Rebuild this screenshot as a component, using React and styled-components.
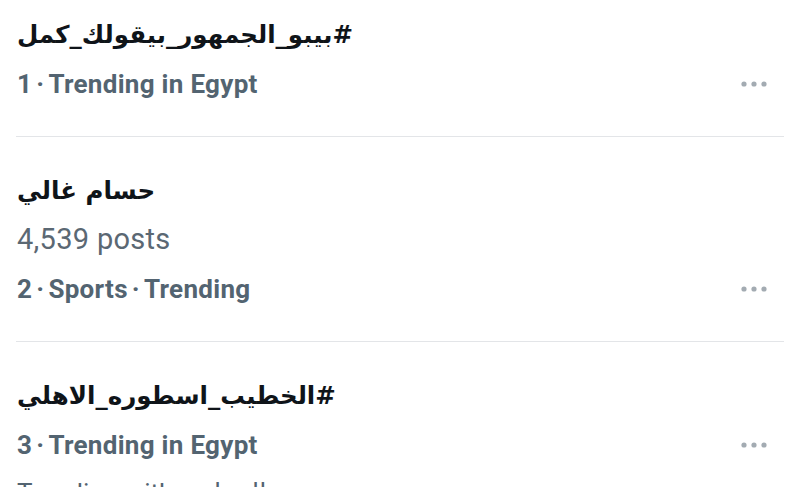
import styled, { createGlobalStyle } from "styled-components";

const trends = [
  {
    title: "#بيبو_الجمهور_بيقولك_كمل",
    meta: ["1", "Trending in Egypt"],
  },
  {
    title: "حسام غالي",
    posts: "4,539 posts",
    meta: ["2", "Sports", "Trending"],
  },
  {
    title: "#الخطيب_اسطوره_الاهلي",
    meta: ["3", "Trending in Egypt"],
    extra: "Trending with ",
    extraAr: "محمود الخطيب",
  },
];

const GlobalStyle = createGlobalStyle`
  html, body {
    margin: 0;
    padding: 0;
    background: #ffffff;
    overflow: hidden;
  }
  body {
    font-family: Roboto, "DejaVu Sans", sans-serif;
  }
`;

const Page = styled.main`
  width: 800px;
  height: 487px;
  overflow: hidden;
  background: #fff;
`;

const List = styled.ul`
  list-style: none;
  margin: -19px 16px 0;
  padding: 0;
`;

const Trend = styled.li`
  padding: 30px 0 28px 1px;
  border-bottom: ${(p) => (p.$last ? "none" : "1.5px solid #e3e5e8")};
`;

const Title = styled.div`
  direction: rtl;
  text-align: left;
  font-family: "DejaVu Sans", sans-serif;
  font-weight: 700;
  font-size: 24.5px;
  line-height: 48px;
  color: #0f1419;
`;

const Posts = styled.div`
  font-family: Roboto, sans-serif;
  font-weight: 400;
  font-size: 29px;
  line-height: 49px;
  color: #5b6873;
  letter-spacing: 0.3px;
`;

const MetaRow = styled.div`
  display: flex;
  align-items: center;
  justify-content: space-between;
  height: 49px;
`;

const Meta = styled.span`
  font-family: Roboto, sans-serif;
  font-weight: 700;
  font-size: 26px;
  color: #536471;
  letter-spacing: 0.3px;
`;

const Sep = styled.span`
  margin: 0 4px;
`;

const Extra = styled.div`
  font-family: Roboto, sans-serif;
  font-size: 26px;
  line-height: 49px;
  color: #536471;
  & > span {
    font-family: "DejaVu Sans", sans-serif;
  }
`;

const MoreButton = styled.button`
  display: flex;
  align-items: center;
  justify-content: center;
  width: 34px;
  height: 34px;
  margin-right: 13px;
  padding: 0;
  border: none;
  background: transparent;
  color: #a3abb2;
`;

const MoreIcon = () => (
  <svg width="28" height="8" viewBox="0 0 28 8" fill="currentColor">
    <circle cx="4" cy="4" r="2.6" />
    <circle cx="14" cy="4" r="2.6" />
    <circle cx="24" cy="4" r="2.6" />
  </svg>
);

export default function App() {
  return (
    <Page>
      <GlobalStyle />
      <List>
        {trends.map((t, i) => (
          <Trend key={i} $last={i === trends.length - 1}>
            <Title>{t.title}</Title>
            {t.posts && <Posts>{t.posts}</Posts>}
            <MetaRow>
              <Meta>
                {t.meta.map((part, j) => (
                  <span key={j}>
                    {j > 0 && <Sep>·</Sep>}
                    {part}
                  </span>
                ))}
              </Meta>
              <MoreButton aria-label="More">
                <MoreIcon />
              </MoreButton>
            </MetaRow>
            {t.extra && (
              <Extra>
                {t.extra}
                <span>{t.extraAr}</span>
              </Extra>
            )}
          </Trend>
        ))}
      </List>
    </Page>
  );
}
